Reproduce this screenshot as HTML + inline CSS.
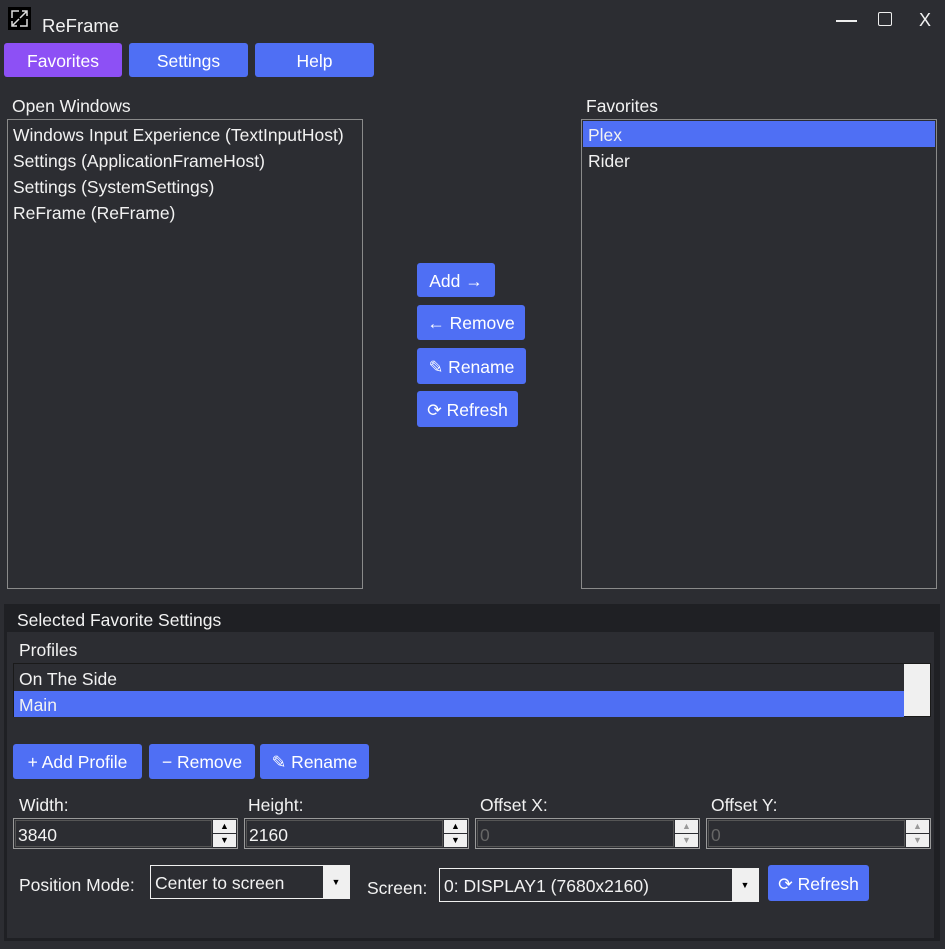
<!DOCTYPE html>
<html><head><meta charset="utf-8"><style>
*{box-sizing:border-box;margin:0;padding:0}
body{width:945px;height:949px;background:#2c2d32;color:#f2f2f2;font-family:"Liberation Sans",sans-serif;font-size:17.5px;position:relative;overflow:hidden}
.a{position:absolute;white-space:nowrap}
.btn{position:absolute;background:#4f6ff4;border-radius:3px;color:#fff;display:flex;align-items:center;justify-content:center;font-size:17.5px;padding-top:2px}
.list{position:absolute;border:1px solid #8a8a8a;background:#2c2d32}
.item{height:26px;line-height:28px;padding-left:5px}
.sel{background:#4f6ff4}
.spin{position:absolute;height:31px;border:1px solid #9a9a9a;background:#2c2d32}
.spin .in{position:absolute;left:1px;top:1px;bottom:1px;right:25px;border:1px solid #555;padding-left:2px;line-height:28px;font-size:17.5px}
.spin .b{position:absolute;right:1px;width:23px;height:13px;background:#f0f0f0;color:#000;font-size:9px;text-align:center;line-height:13px}
.combo{position:absolute;height:34px;border:1px solid #f0f0f0;background:#2c2d32;padding-left:4px;line-height:34px}
.combo .arr{position:absolute;right:0;top:0;bottom:0;width:26px;background:#f0f0f0;color:#000;font-size:9px;text-align:center;line-height:32px}
</style></head><body>
<div class="a" style="left:8px;top:7px;width:23px;height:23px;background:#000">
<svg width="23" height="23" viewBox="0 0 23 23"><g stroke="#ddd" stroke-width="1.5" fill="none"><path d="M4 11V4h7M19 12v7h-7"/><path d="M19 4L12 11M4 19l7-7M4 14v5h5M14 4h5v5"/></g></svg></div>
<div class="a" style="left:42px;top:15px;font-size:18.5px">ReFrame</div>
<div class="a" style="left:836px;top:20px;width:21px;height:1.5px;background:#eee"></div>
<div class="a" style="left:878px;top:12px;width:14px;height:14px;border:1.5px solid #eee;border-radius:2px"></div>
<div class="a" style="left:919px;top:10px;font-size:18px">X</div>

<div class="btn" style="left:4px;top:43px;width:118px;height:34px;background:#8d50f5">Favorites</div>
<div class="btn" style="left:129px;top:43px;width:119px;height:34px">Settings</div>
<div class="btn" style="left:255px;top:43px;width:119px;height:34px">Help</div>

<div class="a" style="left:12px;top:96px">Open Windows</div>
<div class="list" style="left:7px;top:119px;width:356px;height:470px">
<div class="item" style="margin-top:1px">Windows Input Experience (TextInputHost)</div>
<div class="item">Settings (ApplicationFrameHost)</div>
<div class="item">Settings (SystemSettings)</div>
<div class="item">ReFrame (ReFrame)</div>
</div>
<div class="a" style="left:586px;top:96px">Favorites</div>
<div class="list" style="left:581px;top:119px;width:356px;height:470px;padding:1px">
<div class="item sel">Plex</div>
<div class="item">Rider</div>
</div>

<div class="btn" style="left:417px;top:263px;width:78px;height:34px">Add →</div>
<div class="btn" style="left:417px;top:305px;width:108px;height:35px">← Remove</div>
<div class="btn" style="left:417px;top:348px;width:109px;height:36px">✎ Rename</div>
<div class="btn" style="left:417px;top:391px;width:101px;height:36px">⟳ Refresh</div>

<div class="a" style="left:4px;top:604px;width:936px;height:337px;background:#1f2024"></div>
<div class="a" style="left:7px;top:632px;width:927px;height:306px;background:#2c2d32"></div>
<div class="a" style="left:17px;top:610px">Selected Favorite Settings</div>
<div class="a" style="left:19px;top:640px">Profiles</div>
<div class="list" style="left:13px;top:663px;width:918px;height:54px;border-color:#1a1a1a;padding:1px 0">
<div class="item" style="margin-right:26px">On The Side</div>
<div class="item sel" style="margin-right:26px">Main</div>
<div class="a" style="right:0;top:0;width:26px;height:52px;background:#f0f0f0"></div>
</div>

<div class="btn" style="left:13px;top:744px;width:129px;height:35px">+ Add Profile</div>
<div class="btn" style="left:149px;top:744px;width:106px;height:35px">− Remove</div>
<div class="btn" style="left:260px;top:744px;width:109px;height:35px">✎ Rename</div>

<div class="a" style="left:19px;top:795px">Width:</div>
<div class="a" style="left:248px;top:795px">Height:</div>
<div class="a" style="left:480px;top:795px">Offset X:</div>
<div class="a" style="left:711px;top:795px">Offset Y:</div>
<div class="spin" style="left:13px;top:818px;width:225px"><div class="in">3840</div><div class="b" style="top:1px">▲</div><div class="b" style="bottom:1px">▼</div></div>
<div class="spin" style="left:244px;top:818px;width:225px"><div class="in">2160</div><div class="b" style="top:1px">▲</div><div class="b" style="bottom:1px">▼</div></div>
<div class="spin" style="left:475px;top:818px;width:225px"><div class="in" style="color:#666">0</div><div class="b" style="top:1px;color:#999">▲</div><div class="b" style="bottom:1px;color:#999">▼</div></div>
<div class="spin" style="left:706px;top:818px;width:225px"><div class="in" style="color:#666">0</div><div class="b" style="top:1px;color:#999">▲</div><div class="b" style="bottom:1px;color:#999">▼</div></div>

<div class="a" style="left:19px;top:875px">Position Mode:</div>
<div class="combo" style="left:150px;top:865px;width:200px">Center to screen<div class="arr">▼</div></div>
<div class="a" style="left:367px;top:878px">Screen:</div>
<div class="combo" style="left:439px;top:868px;width:320px">0: DISPLAY1 (7680x2160)<div class="arr">▼</div></div>
<div class="btn" style="left:768px;top:865px;width:101px;height:36px">⟳ Refresh</div>
</body></html>
